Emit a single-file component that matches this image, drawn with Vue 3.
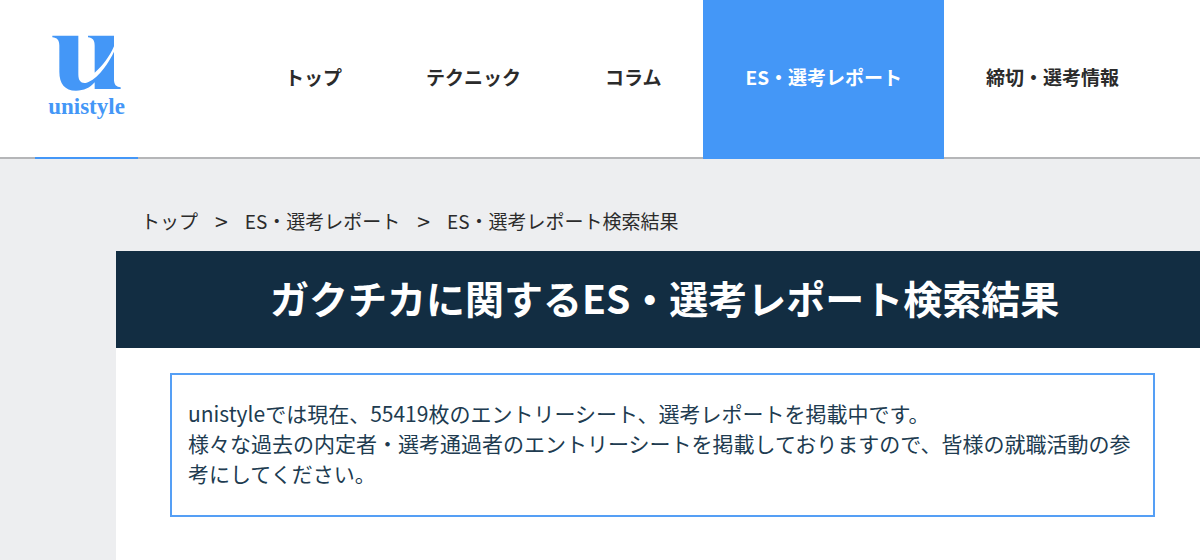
<script setup>
const navItems = [
  { label: 'トップ' },
  { label: 'テクニック' },
  { label: 'コラム' },
  { label: 'ES・選考レポート', active: true },
  { label: '締切・選考情報' },
]
const crumbs = ['トップ', 'ES・選考レポート']
</script>

<template>
  <div class="page">
    <header class="header">
      <a class="logo" href="#">
        <svg class="mark" viewBox="94 45 207 168" aria-hidden="true">
          <path d="M95 47H173V163C173 181 180 189 191 189C214 188 251 155 280 95V181C281 195 287 201 300 202V207H222V187C207 204 190 212 166 212C132 212 116 190 116 155V77C116 60 109 53 95 52Z" />
          <path d="M202 47H280V79C266 111 245 139 222 158V77C222 61 216 53 202 52Z" />
        </svg>
        <span class="wordmark">unistyle</span>
      </a>
      <nav class="nav">
        <a
          v-for="item in navItems"
          :key="item.label"
          href="#"
          class="nav-item"
          :class="{ active: item.active }"
        >{{ item.label }}</a>
      </nav>
    </header>

    <main class="main">
      <nav class="crumbs" aria-label="パンくず">
        <template v-for="crumb in crumbs" :key="crumb">
          <a href="#">{{ crumb }}</a>
          <span class="separator">&gt;</span>
        </template>
        <span>ES・選考レポート検索結果</span>
      </nav>
      <section class="content">
        <h1 class="title">ガクチカに関するES・選考レポート検索結果</h1>
        <p class="notice">
          unistyleでは現在、55419枚のエントリーシート、選考レポートを掲載中です。<br>様々な過去の内定者・選考通過者のエントリーシートを掲載しておりますので、皆様の就職活動の参考にしてください。
        </p>
      </section>
    </main>
  </div>
</template>

<style>
body {
  margin: 0;
  background: #edeef0;
}
</style>

<style scoped>
.page {
  min-height: 100vh;
  display: flex;
  flex-direction: column;
  overflow-x: hidden;
  background: #edeef0;
  color: #2b2b2b;
  font-family: "Noto Sans CJK JP", sans-serif;
  font-size: 19px;
}
a {
  color: inherit;
  text-decoration: none;
}
.header {
  display: flex;
  background: linear-gradient(#b5b6b8, #b5b6b8) bottom / 100% 2px no-repeat #fff;
}
.logo {
  box-sizing: border-box;
  flex: none;
  margin-left: 35px;
  width: 103px;
  padding: 35px 0 34px;
  border-bottom: 2px solid #4497f7;
  display: flex;
  flex-direction: column;
  align-items: center;
  color: #4497f7;
}
.mark {
  width: 69px;
  height: 56px;
  fill: currentColor;
}
.wordmark {
  font: bold 23px/32px "Liberation Serif", serif;
}
.nav {
  display: flex;
  margin-left: 105px;
}
.nav-item {
  flex: none;
  padding: 63px 42px 0;
  line-height: 28px;
  font-weight: bold;
  white-space: nowrap;
}
.active {
  background: #4497f7;
  color: #fff;
}
.main {
  flex: 1;
  display: flex;
  flex-direction: column;
  padding-left: 116px;
}
.crumbs {
  display: flex;
  gap: 17px;
  padding: 48px 25px 16px;
  line-height: 28px;
}
.separator {
  font-size: 23px;
}
.content {
  flex: 1;
  background: #fff;
}
.title {
  margin: 0;
  padding: 18px 36px 22px 154px;
  background: #122d42;
  color: #fff;
  font-size: 39px;
  line-height: 57px;
}
.notice {
  margin: 25px 45px 43px 54px;
  padding: 23px 16px 27px;
  border: 2px solid #559ff5;
  color: #203b50;
  font-size: 21px;
  line-height: 30px;
}
</style>
